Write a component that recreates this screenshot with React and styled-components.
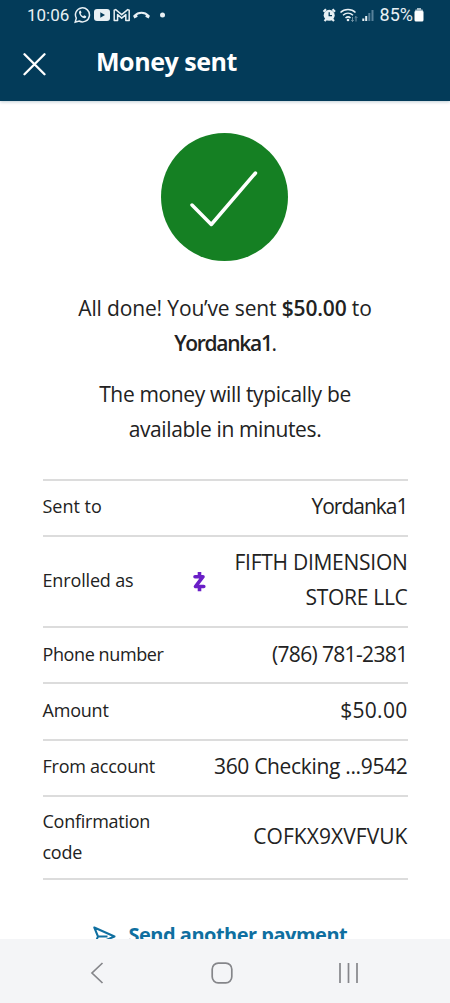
import React from 'react';
import styled, { createGlobalStyle } from 'styled-components';

const GlobalStyle = createGlobalStyle`
  * {
    box-sizing: border-box;
  }

  body {
    margin: 0;
    background: #fff;
    color: #222;
    font-family: 'Open Sans', 'Noto Sans', sans-serif;
  }
`;

const Screen = styled.div`
  display: flex;
  flex-direction: column;
  width: 450px;
  height: 1003px;
  overflow: hidden;
`;

const Header = styled.header`
  flex: none;
  height: 101px;
  background: #033b59;
  color: #fff;
  box-shadow: 0 1px 3px rgba(3, 59, 89, 0.25);
`;

const StatusBar = styled.div`
  display: flex;
  align-items: center;
  justify-content: space-between;
  height: 30px;
  padding: 0 26px 0 27px;
  color: #e8f0f4;
  font-family: Roboto, sans-serif;
  font-size: 17px;
`;

const StatusGroup = styled.div`
  display: flex;
  align-items: center;
`;

const Clock = styled.span`
  margin-right: 5px;
  line-height: 30px;
`;

const BatteryLevel = styled.span`
  margin: 0 1px 0 4px;
  font-size: 18px;
  line-height: 30px;
`;

const TitleBar = styled.div`
  display: flex;
  align-items: center;
  height: 68px;
  padding-left: 23px;
`;

const CloseButton = styled.button`
  display: flex;
  padding: 0;
  margin-right: 49px;
  border: 0;
  background: none;
`;

const Title = styled.h1`
  margin: 0 0 7px;
  font-size: 25px;
  font-weight: 700;
  line-height: 34px;
  letter-spacing: -0.45px;
`;

const Main = styled.main`
  flex: 1;
  min-height: 0;
  display: flex;
  flex-direction: column;
  padding: 32px 42.5px 0;
  overflow: hidden;
`;

const SuccessBadge = styled.div`
  display: flex;
  align-self: center;
  flex: none;
  width: 127px;
  height: 128px;
  margin-right: 1px;
  border-radius: 50%;
  background: #158023;
`;

const Message = styled.p`
  margin: ${({ $top }) => $top}px 0 0;
  font-size: 21px;
  line-height: 35px;
  text-align: center;
  white-space: nowrap;

  b {
    font-weight: 600;
  }
`;

const Line = styled.span`
  display: block;
  letter-spacing: ${({ $tracking }) => $tracking || 0}px;
`;

const Details = styled.dl`
  flex: none;
  margin: 31.6px 0 0;
  border-top: 2px solid #dcdcdc;
`;

const Row = styled.div`
  display: flex;
  align-items: center;
  height: ${({ $height }) => $height || 56.3}px;
  padding-bottom: 2px;
  border-bottom: 2px solid #dcdcdc;
`;

const Label = styled.dt`
  width: 150px;
  font-size: 18px;
  line-height: 31px;
`;

const Value = styled.dd`
  flex: 1;
  margin: 0;
  font-size: 21px;
  line-height: 35px;
  text-align: right;
  white-space: nowrap;
`;

const SendAnother = styled.a`
  display: flex;
  flex: none;
  align-items: center;
  gap: 13px;
  margin-top: 37px;
  padding-left: 50px;
  color: #0f6fa0;
  font-size: 20px;
  font-weight: 700;
  line-height: 35px;
  letter-spacing: -0.5px;
`;

const NavBar = styled.nav`
  display: flex;
  flex: none;
  align-items: center;
  justify-content: space-between;
  height: 64px;
  padding: 3px 91px 0 90px;
  background: #f4f5f7;
`;

const rows = [
  {
    label: [{ text: 'Sent to' }],
    value: [{ text: 'Yordanka1', tracking: -1 }],
  },
  {
    label: [{ text: 'Enrolled as', tracking: -0.15 }],
    value: [
      { text: 'FIFTH DIMENSION', tracking: -0.27 },
      { text: 'STORE LLC', tracking: -0.3 },
    ],
    height: 91.2,
    zelle: true,
  },
  {
    label: [{ text: 'Phone number', tracking: -0.4 }],
    value: [{ text: '(786) 781-2381', tracking: -0.65 }],
  },
  {
    label: [{ text: 'Amount', tracking: -0.2 }],
    value: [{ text: '$50.00', tracking: 0.3 }],
  },
  {
    label: [{ text: 'From account', tracking: -0.25 }],
    value: [{ text: '360 Checking ...9542', tracking: -0.33 }],
  },
  {
    label: [
      { text: 'Confirmation', tracking: -0.25 },
      { text: 'code', tracking: -0.25 },
    ],
    value: [{ text: 'COFKX9XVFVUK', tracking: 0.05 }],
    height: 83.2,
  },
];

const NotificationIcons = () => (
  <svg width="94" height="18" viewBox="0 0 94 18" fill="none">
    <path d="M1.2 16.2l1.1-4a7 7 0 1 1 2.8 2.8z" stroke="#e8f0f4" strokeWidth="1.5" />
    <path d="M6 4.6c-1.5 1-1.3 3 .4 5.1s4.2 3.3 5.7 1.7l.1-1.2-2-1-1 1c-1.2-.5-2-1.3-2.5-2.5l.8-.9-.7-2z" fill="#e8f0f4" />
    <rect x="20" y="3" width="16" height="12" rx="3" fill="#e8f0f4" />
    <path d="M26.3 6.3v5.4l4.7-2.7z" fill="#033b59" />
    <path d="M40.2 14.6V4.2l1.5-.6 6 5 6-5 1.5.6v10.400h-3.400V8.600l-4.100 3.500-4.100-3.500v6z" stroke="#e8f0f4" strokeWidth="1.500" strokeLinejoin="round" />
    <path d="M60.500 10c3.800-4.200 10.200-4.200 14 0" stroke="#e8f0f4" strokeWidth="2" />
    <path d="M59 9.700l3.500-2 1.200 3-3.300 1.800zM76 9.700l-3.500-2-1.200 3 3.300 1.800z" fill="#e8f0f4" />
    <circle cx="88.500" cy="9" r="2.500" fill="#e8f0f4" />
  </svg>
);

const SystemIcons = () => (
  <svg width="54" height="18" viewBox="0 0 54 18" fill="none">
    <path d="M1.500 5.700l2.500-2.500M10.500 3.200l2.500 2.500M2.500 15l2-2M12 15l-2-2" stroke="#e8f0f4" strokeWidth="2.200" />
    <circle cx="7.200" cy="9.300" r="5.500" fill="#e8f0f4" />
    <path d="M7.200 6.300v3.300H10" stroke="#033b59" strokeWidth="1.300" />
    <path d="M18.500 6.500c4-4 11-4 15 0M21 9.200c3-2.700 7-2.700 10 0M23.500 12c1.500-1.300 3.700-1.300 5 0" stroke="#e8f0f4" strokeWidth="1.500" />
    <circle cx="26" cy="14" r="1.300" fill="#e8f0f4" />
    <path d="M30.500 11v4.500m-1.300-1.300l1.300 1.300 1.300-1.300M34 15.500v-5m-1.300 1.300l1.300-1.300 1.300 1.300" stroke="#7e9cad" strokeWidth=".9" />
    <path d="M40.300 12.500h2V15h-2zM43.200 10h2v5h-2z" fill="#e8f0f4" />
    <path d="M46.300 7h2v8h-2zM49.500 4h2v11h-2z" fill="#58819a" />
  </svg>
);

const BatteryIcon = () => (
  <svg width="10" height="14" viewBox="0 0 10 14">
    <path d="M3 0h4v1.500h1.500L9.500 4H.5l1-2.500H3z" fill="#a7bcc8" />
    <rect x=".5" y="3" width="9" height="10.500" rx="1.500" fill="#fff" />
  </svg>
);

const CloseIcon = () => (
  <svg width="24" height="24" viewBox="0 0 24 24">
    <path d="M1.500 2.200l20 20M21.500 2.200l-20 20" stroke="#fff" strokeWidth="2.300" strokeLinecap="round" />
  </svg>
);

const CheckIcon = () => (
  <svg width="127" height="128" viewBox="0 0 127 128" fill="none">
    <path d="M31 72L50.300 91.500 94.500 40" stroke="#fff" strokeWidth="3.500" strokeLinecap="round" strokeLinejoin="round" />
  </svg>
);

const ZelleIcon = () => (
  <svg width="13" height="24" viewBox="0 0 13 20" fill="none" overflow="visible">
    <path d="M2 6.700h8L2.500 16.500h8.300" stroke="#6a1fc7" strokeWidth="3.600" strokeLinecap="round" strokeLinejoin="round" />
    <path d="M6.500 2v4M6.500 17v4.300" stroke="#6a1fc7" strokeWidth="3.600" />
  </svg>
);

const SendIcon = () => (
  <svg width="23" height="22" viewBox="0 0 23 22" fill="none">
    <path d="M1.300 3.500L21.500 12.500 1.300 21 5 12.500zM5 12.500h9.500" stroke="#0f6fa0" strokeWidth="2" strokeLinejoin="round" />
  </svg>
);

const NavIcons = () => (
  <>
    <svg width="14" height="22" viewBox="0 0 14 22" fill="none">
      <path d="M12.500 1L2 11l10.500 10" stroke="#85868a" strokeWidth="1.700" />
    </svg>
    <svg width="22" height="22" viewBox="0 0 22 22" fill="none">
      <rect x="1.200" y="1.200" width="19.600" height="19.600" rx="6" stroke="#85868a" strokeWidth="1.700" />
    </svg>
    <svg width="20" height="22" viewBox="0 0 20 22" fill="none">
      <path d="M1 1v20M9.500 1v20M18 1v20" stroke="#85868a" strokeWidth="1.700" />
    </svg>
  </>
);

const Lines = ({ items }) => items.map(({ text, tracking }) => (
  <Line key={text} $tracking={tracking}>{text}</Line>
));

const App = () => (
  <>
    <GlobalStyle />
    <Screen>
      <Header>
        <StatusBar>
          <StatusGroup>
            <Clock>10:06</Clock>
            <NotificationIcons />
          </StatusGroup>
          <StatusGroup>
            <SystemIcons />
            <BatteryLevel>85%</BatteryLevel>
            <BatteryIcon />
          </StatusGroup>
        </StatusBar>
        <TitleBar>
          <CloseButton aria-label="Close">
            <CloseIcon />
          </CloseButton>
          <Title>Money sent</Title>
        </TitleBar>
      </Header>

      <Main>
        <SuccessBadge>
          <CheckIcon />
        </SuccessBadge>
        <Message $top={30}>
          <Line $tracking={-0.15}>All done! You’ve sent <b>$50.00</b> to</Line>
          <Line $tracking={-1.3}><b>Yordanka1</b>.</Line>
        </Message>
        <Message $top={16}>
          <Line $tracking={-0.35}>The money will typically be</Line>
          <Line $tracking={-0.37}>available in minutes.</Line>
        </Message>

        <Details>
          {rows.map((row) => (
            <Row key={row.label[0].text} $height={row.height}>
              <Label>
                <Lines items={row.label} />
              </Label>
              {row.zelle && <ZelleIcon />}
              <Value>
                <Lines items={row.value} />
              </Value>
            </Row>
          ))}
        </Details>

        <SendAnother>
          <SendIcon />
          Send another payment
        </SendAnother>
      </Main>

      <NavBar>
        <NavIcons />
      </NavBar>
    </Screen>
  </>
);

export default App;
